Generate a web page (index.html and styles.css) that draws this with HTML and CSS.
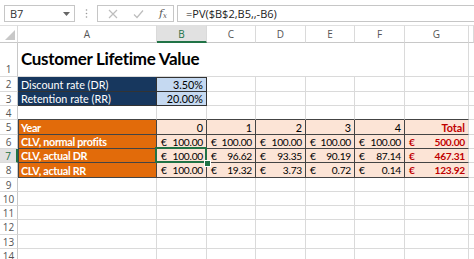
FILE: index.html
```html
<!DOCTYPE html>
<html>
<head>
<meta charset="utf-8">
<link rel="stylesheet" href="styles.css">
</head>
<body>
<div class="toolbar">
  <div class="namebox"><span>B7</span><svg width="7" height="4" viewBox="0 0 7 4"><polygon points="0,0 7,0 3.5,4" fill="#666"/></svg></div>
  <div class="dots"><svg width="3" height="9" viewBox="0 0 3 9"><circle cx="1.5" cy="1" r="0.8" fill="#999"/><circle cx="1.5" cy="4.5" r="0.8" fill="#999"/><circle cx="1.5" cy="8" r="0.8" fill="#999"/></svg></div>
  <div class="fbtns">
    <svg class="ic" width="10" height="10" viewBox="0 0 10 10"><path d="M1 1 L9 9 M9 1 L1 9" stroke="#bdbdbd" stroke-width="1.2" fill="none"/></svg>
    <svg class="ic" width="11" height="10" viewBox="0 0 11 10"><path d="M1 5.5 L4 8.5 L10 1.5" stroke="#bdbdbd" stroke-width="1.2" fill="none"/></svg>
    <span class="fx">f<sub>x</sub></span>
  </div>
  <div class="formula">=PV($B$2,B5,,-B6)</div>
</div>
<div class="sheet">
  <div class="corner"><svg width="10" height="10" viewBox="0 0 10 10"><polygon points="10,0 10,10 0,10" fill="#c8c8c8"/></svg></div>
  <div class="ch">A</div>
  <div class="ch selh">B</div>
  <div class="ch">C</div>
  <div class="ch">D</div>
  <div class="ch">E</div>
  <div class="ch">F</div>
  <div class="ch">G</div>
  <div class="ch"></div>
  <!-- row 1 -->
  <div class="rh rbot">1</div>
  <div class="c title span6">Customer Lifetime Value</div>
  <div class="c"></div>
  <div class="c"></div>
  <!-- row 2 -->
  <div class="rh">2</div>
  <div class="c navy">Discount rate (DR)</div>
  <div class="c lblue dt r">3.50%</div>
  <div class="c"></div><div class="c"></div><div class="c"></div><div class="c"></div><div class="c"></div><div class="c"></div>
  <!-- row 3 -->
  <div class="rh">3</div>
  <div class="c navy">Retention rate (RR)</div>
  <div class="c lblue r">20.00%</div>
  <div class="c"></div><div class="c"></div><div class="c"></div><div class="c"></div><div class="c"></div><div class="c"></div>
  <!-- row 4 -->
  <div class="rh">4</div>
  <div class="c dbb"></div><div class="c dbb"></div><div class="c dbb"></div><div class="c dbb"></div><div class="c dbb"></div><div class="c dbb"></div><div class="c dbb"></div><div class="c"></div>
  <!-- row 5 -->
  <div class="rh">5</div>
  <div class="c orange">Year</div>
  <div class="c peach r">0</div>
  <div class="c peach r">1</div>
  <div class="c peach r">2</div>
  <div class="c peach r">3</div>
  <div class="c peach r">4</div>
  <div class="c peach r red">Total</div>
  <div class="c"></div>
  <!-- row 6 -->
  <div class="rh">6</div>
  <div class="c orange">CLV, normal profits</div>
  <div class="c peach num"><span>€</span><span>100.00</span></div>
  <div class="c peach num"><span>€</span><span>100.00</span></div>
  <div class="c peach num"><span>€</span><span>100.00</span></div>
  <div class="c peach num"><span>€</span><span>100.00</span></div>
  <div class="c peach num"><span>€</span><span>100.00</span></div>
  <div class="c peach num red"><span>€</span><span>500.00</span></div>
  <div class="c"></div>
  <!-- row 7 -->
  <div class="rh selr">7</div>
  <div class="c orange">CLV, actual DR</div>
  <div class="c peach num selcell"><span>€</span><span>100.00</span><div class="sel"></div><div class="handle"></div></div>
  <div class="c peach num"><span>€</span><span>96.62</span></div>
  <div class="c peach num"><span>€</span><span>93.35</span></div>
  <div class="c peach num"><span>€</span><span>90.19</span></div>
  <div class="c peach num"><span>€</span><span>87.14</span></div>
  <div class="c peach num red"><span>€</span><span>467.31</span></div>
  <div class="c"></div>
  <!-- row 8 -->
  <div class="rh">8</div>
  <div class="c orange">CLV, actual RR</div>
  <div class="c peach num"><span>€</span><span>100.00</span></div>
  <div class="c peach num"><span>€</span><span>19.32</span></div>
  <div class="c peach num"><span>€</span><span>3.73</span></div>
  <div class="c peach num"><span>€</span><span>0.72</span></div>
  <div class="c peach num"><span>€</span><span>0.14</span></div>
  <div class="c peach num red"><span>€</span><span>123.92</span></div>
  <div class="c"></div>
  <!-- rows 9-14 -->
  <div class="rh">9</div>
  <div class="c"></div><div class="c"></div><div class="c"></div><div class="c"></div><div class="c"></div><div class="c"></div><div class="c"></div><div class="c"></div>
  <div class="rh">10</div>
  <div class="c"></div><div class="c"></div><div class="c"></div><div class="c"></div><div class="c"></div><div class="c"></div><div class="c"></div><div class="c"></div>
  <div class="rh">11</div>
  <div class="c"></div><div class="c"></div><div class="c"></div><div class="c"></div><div class="c"></div><div class="c"></div><div class="c"></div><div class="c"></div>
  <div class="rh">12</div>
  <div class="c"></div><div class="c"></div><div class="c"></div><div class="c"></div><div class="c"></div><div class="c"></div><div class="c"></div><div class="c"></div>
  <div class="rh">13</div>
  <div class="c"></div><div class="c"></div><div class="c"></div><div class="c"></div><div class="c"></div><div class="c"></div><div class="c"></div><div class="c"></div>
  <div class="rh">14</div>
  <div class="c"></div><div class="c"></div><div class="c"></div><div class="c"></div><div class="c"></div><div class="c"></div><div class="c"></div><div class="c"></div>
</div>
</body>
</html>
```

FILE: styles.css
```css
html, body {
  margin: 0;
  padding: 0;
  background: #fff;
  overflow: hidden;
  width: 474px;
  height: 259px;
}
.toolbar {
  display: flex;
  height: 25px;
  box-sizing: border-box;
  padding: 5px 0 0 4px;
  font-family: "Open Sans", "DejaVu Sans", sans-serif;
  font-size: 11px;
  color: #333;
}
.namebox {
  width: 71px;
  height: 17px;
  box-sizing: border-box;
  border: 1px solid #c6c6c6;
  display: flex;
  align-items: center;
  justify-content: space-between;
  padding: 0 4px 0 5px;
}
.dots {
  width: 22px;
  display: flex;
  align-items: center;
  justify-content: center;
  height: 17px;
}
.fbtns {
  width: 77px;
  height: 17px;
  box-sizing: border-box;
  border: 1px solid #c6c6c6;
  display: flex;
  align-items: center;
  padding-left: 10px;
  gap: 15px;
}
.fx {
  font-family: "DejaVu Serif", "Liberation Serif", serif;
  font-style: italic;
  font-size: 11px;
  color: #555;
}
.fx sub {
  font-size: 7px;
  vertical-align: -1px;
}
.formula {
  margin-left: 3px;
  flex: 1;
  height: 17px;
  box-sizing: border-box;
  border: 1px solid #c6c6c6;
  border-right: none;
  display: flex;
  align-items: center;
  padding-left: 8px;
  color: #222;
}
.sheet {
  display: grid;
  grid-template-columns: 18px 139px 50px 49px 50px 49px 50px 64px 5px;
  grid-template-rows: 18px 34px 15px 14px 14px 15px 14px 14px 15px 14px 14px 14px 15px 14px 14px;
  font-family: Lato, "Liberation Sans", sans-serif;
  font-size: 10.8px;
}
.corner, .ch, .rh, .c {
  box-sizing: border-box;
  border-right: 1px solid #dadada;
  border-bottom: 1px solid #dadada;
  white-space: nowrap;
}
.corner {
  border-top: 1px solid #e0e0e0;
  border-bottom-color: #c8c8c8;
  display: flex;
  align-items: flex-end;
  justify-content: flex-end;
  padding: 0 2px 2px 0;
}
.ch {
  border-top: 1px solid #e0e0e0;
  border-bottom-color: #c8c8c8;
  display: flex;
  align-items: center;
  justify-content: center;
  color: #555;
  font-family: "Open Sans", sans-serif;
  font-size: 10px;
}
.selh {
  background: #e1e1e1;
  border-bottom: 2px solid #217346;
  color: #217346;
}
.rh {
  display: flex;
  align-items: center;
  justify-content: center;
  color: #555;
  font-family: "Open Sans", sans-serif;
  font-size: 10px;
  border-right-color: #c8c8c8;
}
.rbot {
  align-items: flex-end;
}
.selr {
  background: #e1e1e1;
  border-right: 2px solid #217346;
  color: #217346;
}
.c {
  display: flex;
  align-items: center;
  padding: 0 3px;
  color: #000;
  overflow: visible;
}
.span6 {
  grid-column: span 6;
}
.title {
  align-items: flex-end;
  padding-bottom: 7px;
  font-weight: 700;
  font-size: 17px;
  letter-spacing: -0.3px;
}
.navy {
  background: #17375e;
  color: #fff;
  border-right-color: #333;
  border-bottom-color: #333;
}
.lblue {
  background: #c5d9f1;
  border-right-color: #333;
  border-bottom-color: #333;
}
.dt {
  box-shadow: inset 0 1px #333;
}
.r {
  justify-content: flex-end;
}
.dbb {
  border-bottom-color: #444;
}
.orange {
  background: #e26b0a;
  color: #fff;
  font-weight: 700;
  letter-spacing: -0.3px;
  border-right-color: #444;
  border-bottom-color: #444;
  box-shadow: inset 1px 0 #444;
}
.peach {
  background: #fce4d6;
  border-right-color: #444;
  border-bottom-color: #444;
}
.num {
  justify-content: space-between;
  padding: 0 3px 0 4px;
  font-size: 10.2px;
  letter-spacing: -0.25px;
}
.red {
  color: #c00000;
  font-weight: 700;
  border-right-color: #dadada;
}
.selcell {
  position: relative;
}
.sel {
  position: absolute;
  left: -2px;
  top: -2px;
  right: -1px;
  bottom: -1px;
  border: 2px solid #217346;
}
.handle {
  position: absolute;
  right: -4px;
  bottom: -4px;
  width: 5px;
  height: 5px;
  box-sizing: border-box;
  background: #217346;
  outline: 1px solid #fff;
}
```
